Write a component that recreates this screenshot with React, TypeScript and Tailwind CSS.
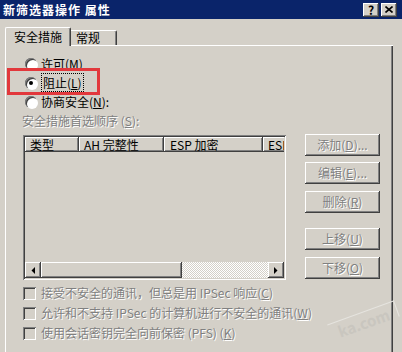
import React from 'react';

const raised =
  'bg-[#d4d0c8] shadow-[inset_-1px_-1px_0_#404040,inset_1px_1px_0_#ffffff,inset_-2px_-2px_0_#808080]';
const sunken =
  'shadow-[inset_1px_1px_0_#808080,inset_-1px_-1px_0_#ffffff,inset_2px_2px_0_#404040,inset_-2px_-2px_0_#d4d0c8]';
const disabledText = 'text-[#808080] [text-shadow:1px_1px_0_#ffffff]';

const Mn: React.FC<{ k: string }> = ({ k }) => (
  <>
    (<span className="underline underline-offset-1">{k}</span>)
  </>
);

const Radio: React.FC<{ checked?: boolean; children: React.ReactNode }> = ({ checked, children }) => (
  <div className="flex h-[19px] items-center">
    <span className="relative flex h-3 w-3 items-center justify-center rounded-full bg-white shadow-[inset_1px_1px_0_#808080,inset_2px_2px_0_#404040,1px_1px_0_#ffffff]">
      {checked && <span className="h-1 w-1 rounded-full bg-black" />}
    </span>
    <span className="ml-[4px]">{children}</span>
  </div>
);

const Check: React.FC<{ children: React.ReactNode }> = ({ children }) => (
  <div className="flex h-5 items-center">
    <span className={`h-[13px] w-[13px] bg-[#d4d0c8] ${sunken}`} />
    <span className={`ml-[5px] ${disabledText}`}>{children}</span>
  </div>
);

const Btn: React.FC<{ children: React.ReactNode }> = ({ children }) => (
  <div className={`flex h-[22px] w-[75px] items-center justify-center ${raised} ${disabledText}`}>
    {children}
  </div>
);

const Arrow: React.FC<{ dir: 'l' | 'r' }> = ({ dir }) => (
  <div className={`flex h-4 w-4 items-center justify-center ${raised}`}>
    <svg width="4" height="7" viewBox="0 0 4 7">
      {dir === 'l' ? <path d="M4 0V7L0.5 3.5Z" fill="#000" /> : <path d="M0 0V7L3.5 3.5Z" fill="#000" />}
    </svg>
  </div>
);

export default function App() {
  return (
    <div className="relative h-[352px] w-[402px] overflow-hidden bg-[#d4d0c8] font-['Noto_Sans_CJK_SC',sans-serif] text-[12px] leading-[12px] text-black">
      {/* title bar */}
      <div className="flex h-[19px] items-center bg-[#0a246a] pl-[3px] pr-[5px]">
        <span className="text-[12px] font-bold tracking-[1px] text-white">新筛选器操作 属性</span>
        <div className="ml-auto flex gap-[2px]">
          <div className={`flex h-[14px] w-4 items-center justify-center text-[12px] font-bold ${raised}`}>?</div>
          <div className={`flex h-[14px] w-4 items-center justify-center ${raised}`}>
            <svg width="8" height="7" viewBox="0 0 8 7">
              <path d="M0.5 0.5L7.5 6.5M7.5 0.5L0.5 6.5" stroke="#000" strokeWidth="1.6" />
            </svg>
          </div>
        </div>
      </div>

      {/* tabs */}
      <div className="mt-2 flex h-[18px] items-end pl-[5px]">
        <div className="relative z-10 -mb-px flex h-[19px] w-[66px] items-center justify-center rounded-t-[2px] border-l border-t border-r border-white border-r-[#404040] bg-[#d4d0c8] shadow-[inset_-1px_0_0_#808080]">
          安全措施
        </div>
        <div className="flex h-[15px] w-[46px] items-center rounded-tr-[2px] border-t border-r border-white border-r-[#404040] pl-[5px] shadow-[inset_-1px_0_0_#808080]">
          常规
        </div>
      </div>

      {/* tab panel */}
      <div className="ml-[5px] h-[307px] w-[388px] border-l border-t border-white shadow-[inset_-1px_0_0_#404040,inset_-2px_0_0_#808080]">
        <div className="pl-[19px] pt-2">
          <Radio>
            许可<Mn k="M" />
          </Radio>
          <Radio checked>
            <span className="border border-dotted border-black px-px">
              阻止<Mn k="L" />
            </span>
          </Radio>
          <Radio>
            协商安全<Mn k="N" />:
          </Radio>
        </div>
        <div className={`flex h-[19px] items-center pl-4 ${disabledText}`}>
          安全措施首选顺序 <Mn k="S" />:
        </div>

        <div className="mt-[5px] flex pl-[17px]">
          {/* list view */}
          <div className={`flex h-[145px] w-[263px] flex-col bg-[#d4d0c8] p-[2px] ${sunken}`}>
            <div className="flex h-[15px] overflow-hidden">
              <div className={`flex w-[54px] shrink-0 items-center pl-[5px] ${raised}`}>类型</div>
              <div className={`flex w-[85px] shrink-0 items-center pl-[5px] ${raised}`}>AH 完整性</div>
              <div className={`flex w-[99px] shrink-0 items-center pl-[6px] ${raised}`}>ESP 加密</div>
              <div className={`flex w-[40px] shrink-0 items-center pl-[5px] ${raised}`}>ESP</div>
            </div>
            <div className="flex-1" />
            <div className="flex h-4">
              <Arrow dir="l" />
              <div className={`w-[141px] ${raised}`} />
              <div className="flex-1 bg-[repeating-conic-gradient(#ffffff_0_25%,#d4d0c8_0_50%)] [background-size:2px_2px]" />
              <Arrow dir="r" />
            </div>
          </div>

          {/* buttons */}
          <div className="-mt-px ml-[19px] flex flex-col">
            <Btn>
              添加<Mn k="D" />...
            </Btn>
            <div className="mt-[6px]">
              <Btn>
                编辑<Mn k="E" />...
              </Btn>
            </div>
            <div className="mt-[7px]">
              <Btn>
                删除<Mn k="R" />
              </Btn>
            </div>
            <div className="mt-[15px]">
              <Btn>
                上移<Mn k="U" />
              </Btn>
            </div>
            <div className="mt-[7px]">
              <Btn>
                下移<Mn k="O" />
              </Btn>
            </div>
          </div>
        </div>

        <div className="mt-[3px] pl-[17px]">
          <Check>
            接受不安全的通讯，但总是用 IPSec 响应<Mn k="C" />
          </Check>
          <Check>
            允许和不支持 IPSec 的计算机进行不安全的通讯<Mn k="W" />
          </Check>
          <Check>
            使用会话密钥完全向前保密 (PFS) <Mn k="K" />
          </Check>
        </div>
      </div>

      {/* annotation box */}
      <div className="absolute left-[7px] top-[68px] h-[27px] w-[93px] border-[3px] border-[#e2383c]" />

      {/* watermark */}
      <div className="absolute left-[328px] top-[312px] -rotate-[20deg] border-r border-t border-[#e6e4df] px-2 pt-1 text-[15px] font-bold text-[#c9c6bf]">
        ka.com
      </div>
    </div>
  );
}
